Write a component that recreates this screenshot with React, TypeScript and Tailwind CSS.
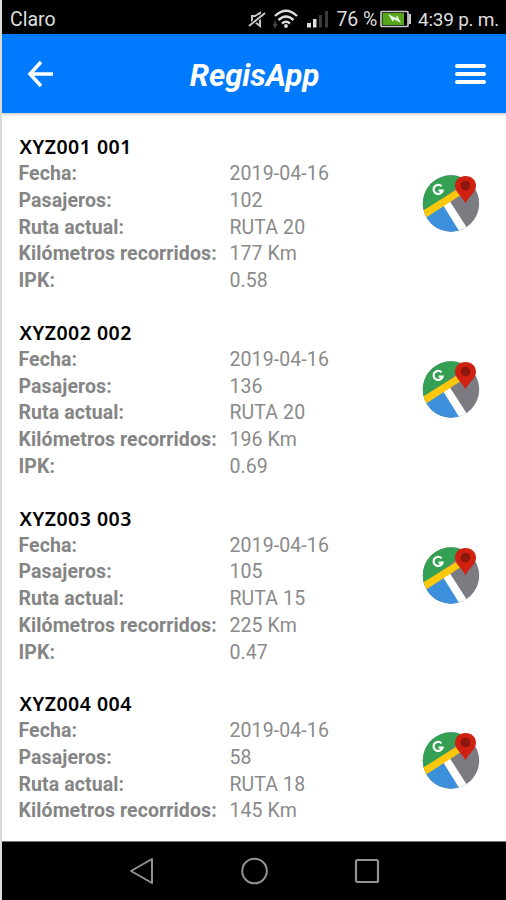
const records = [
  { title: 'XYZ001 001', fecha: '2019-04-16', pasajeros: '102', ruta: 'RUTA 20', km: '177 Km', ipk: '0.58' },
  { title: 'XYZ002 002', fecha: '2019-04-16', pasajeros: '136', ruta: 'RUTA 20', km: '196 Km', ipk: '0.69' },
  { title: 'XYZ003 003', fecha: '2019-04-16', pasajeros: '105', ruta: 'RUTA 15', km: '225 Km', ipk: '0.47' },
  { title: 'XYZ004 004', fecha: '2019-04-16', pasajeros: '58', ruta: 'RUTA 18', km: '145 Km', ipk: '' },
];

function MapIcon() {
  return (
    <svg className="h-[60px] w-[60px]" viewBox="0 0 60 60">
      <defs>
        <clipPath id="disc">
          <circle cx="30" cy="31.5" r="28.2" />
        </clipPath>
      </defs>
      <g clipPath="url(#disc)">
        <rect width="60" height="60" fill="#7c7b82" />
        <path d="M0 0H52L30 20L0 44Z" fill="#34a053" />
        <path d="M0 46L24 30L50 68H0Z" fill="#3c90db" />
        <path d="M22 33L28 28L48 59L40 62Z" fill="#fff" />
        <path d="M0 40L46 11V19L0 49Z" fill="#fbc80e" />
      </g>
      <path d="M20.5 14.2A4.6 4.6 0 1 0 21.6 18.6H17.5" fill="none" stroke="#fff" strokeWidth="2.2" />
      <path d="M44.5 31.5C42 25 34 20.5 34 14C34 7.8 38.7 4 44.5 4S55 7.8 55 14C55 20.5 47 25 44.5 31.5Z" fill="#d02010" />
      <circle cx="44.5" cy="13.5" r="4.8" fill="#8e170d" />
    </svg>
  );
}

function StatusBar() {
  return (
    <div className="flex h-[34px] shrink-0 items-center bg-black pt-[5px] pr-[7px] pl-[8px] text-[#dedede]">
      <span className="text-[19.5px] leading-[29px]">Claro</span>
      <svg className="ml-auto h-[20px] w-[18px] shrink-0" viewBox="0 0 18 20" fill="none" stroke="#c9c9c9">
        <path d="M4 6V12H7L12 16V3L7 6Z" strokeWidth="2" />
        <path d="M1 16L17 3" stroke="#000" strokeWidth="4" />
        <path d="M1 16L17 3" strokeWidth="2" />
      </svg>
      <svg className="ml-[7px] h-[20px] w-[26px] shrink-0 -translate-y-px" viewBox="0 0 26 20" fill="none" stroke="#dedede" strokeWidth="2.4">
        <path d="M2 7Q13 -3.5 24 7M5.5 11Q13 4 20.5 11M9 14.5Q13 11 17 14.5" />
        <circle cx="13" cy="17" r="1.9" fill="#dedede" stroke="none" />
        <path d="M2 12V18M0 15L2 18L4 15" stroke="#444" strokeWidth="1.5" />
      </svg>
      <svg className="ml-[8px] h-[20px] w-[22px] shrink-0" viewBox="0 0 22 20">
        <path d="M0 13H4V17.5H0Z" fill="#dedede" />
        <path d="M6 9H9.5V17.5H6Z" fill="#dedede" />
        <path d="M12 5H15V17.5H12Z M18 1H21V17.5H18Z" fill="#3b3b3b" />
      </svg>
      <span className="ml-[7px] text-[19.5px] leading-[29px] tracking-[-0.1px] whitespace-nowrap">76 %</span>
      <svg className="ml-[3px] h-[18px] w-[32px] shrink-0 -translate-y-px" viewBox="0 0 32 18">
        <rect x="1" y="1.5" width="27" height="15" rx="1" fill="#000" stroke="#c9c9c9" strokeWidth="1.7" />
        <rect x="2.5" y="3" width="21.5" height="12" fill="#56a51c" />
        <path d="M29.8 4V14" stroke="#c9c9c9" strokeWidth="2.4" />
        <path d="M8 4L16 8L17 5L21 13L14 9.5L13 12Z" fill="#e8f3dd" />
      </svg>
      <span className="ml-[6px] text-[19px] leading-[29px] tracking-[-0.25px] whitespace-nowrap">4:39 p. m.</span>
    </div>
  );
}

function Row({ label, value }: { label: string; value: string }) {
  return (
    <div className="flex h-[26.75px] items-center whitespace-nowrap">
      <span className="w-[211px] font-bold tracking-[0.1px]">{label}</span>
      <span className="tracking-[0.1px] text-[#8a8a8a]">{value}</span>
    </div>
  );
}

export default function App() {
  return (
    <div className="flex h-[900px] w-[506px] flex-col overflow-hidden border-l-2 border-[#dcdcdc] bg-white font-['Roboto',sans-serif]">
      <StatusBar />
      <header className="z-10 flex h-[79px] shrink-0 items-center justify-between bg-[#007aff] pr-[20px] pl-[24px] shadow-[0_1px_3px_rgba(0,0,0,0.3)]">
        <svg className="h-[28px] w-[28px]" viewBox="0 0 28 28" fill="none" stroke="#fff" strokeWidth="3.5">
          <path d="M15 2L4 14L15 26M4 14H27" />
        </svg>
        <h1 className="mt-[4px] text-[31px] leading-none font-bold italic text-white">RegisApp</h1>
        <div className="flex w-[31px] flex-col gap-[4px]">
          <i className="h-1 rounded-sm bg-white" />
          <i className="h-1 rounded-sm bg-white" />
          <i className="h-1 rounded-sm bg-white" />
        </div>
      </header>
      <main className="flex min-h-0 flex-1 flex-col overflow-hidden pt-[21.4px]">
        {records.map((r) => (
          <section key={r.title} className="flex h-[185.7px] shrink-0 items-start justify-between pr-[25px] pl-[16.5px]">
            <div className="text-[19.5px] text-[#858585]">
              <h2 className="h-[26px] pl-[1px] font-['Noto_Sans',sans-serif] text-[19.5px] leading-[26px] font-semibold tracking-[0.5px] text-black">{r.title}</h2>
              <Row label="Fecha:" value={r.fecha} />
              <Row label="Pasajeros:" value={r.pasajeros} />
              <Row label="Ruta actual:" value={r.ruta} />
              <Row label="Kilómetros recorridos:" value={r.km} />
              {r.ipk && <Row label="IPK:" value={r.ipk} />}
            </div>
            <div className="mt-[38px]"><MapIcon /></div>
          </section>
        ))}
      </main>
      <nav className="flex h-[59px] shrink-0 items-center justify-center gap-[86px] border-t border-[#777] bg-black">
        <svg className="h-[28px] w-[26px]" viewBox="0 0 26 28" fill="none" stroke="#929292" strokeWidth="2">
          <path d="M24 2V26L3 14Z" strokeLinejoin="round" />
        </svg>
        <svg className="h-[28px] w-[28px]" viewBox="0 0 28 28" fill="none" stroke="#929292" strokeWidth="2">
          <circle cx="14.5" cy="14" r="12.3" />
        </svg>
        <svg className="h-[26px] w-[26px]" viewBox="0 0 26 26" fill="none" stroke="#929292" strokeWidth="2.2">
          <rect x="2" y="2" width="22" height="22" rx="1.5" />
        </svg>
      </nav>
    </div>
  );
}
